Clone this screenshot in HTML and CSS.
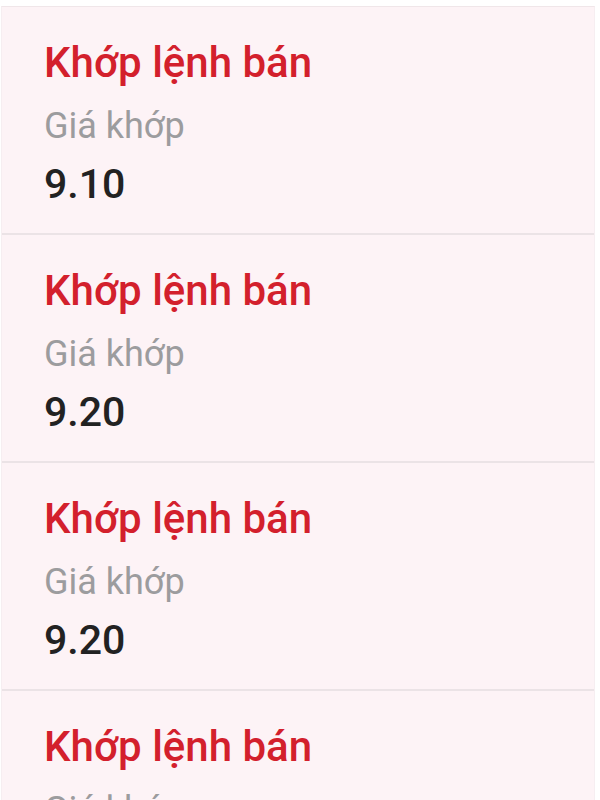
FILE: index.html
```html
<!DOCTYPE html>
<html lang="vi">

<head>
    <meta charset="UTF-8">
    <title>Khớp lệnh</title>
    <link rel="stylesheet" href="styles.css">
</head>

<body>
    <ul class="list">
        <li class="item">
            <div class="title">Khớp lệnh bán</div>
            <div class="label">Giá khớp</div>
            <div class="price">9.10</div>
        </li>
        <li class="item">
            <div class="title">Khớp lệnh bán</div>
            <div class="label">Giá khớp</div>
            <div class="price">9.20</div>
        </li>
        <li class="item">
            <div class="title">Khớp lệnh bán</div>
            <div class="label">Giá khớp</div>
            <div class="price">9.20</div>
        </li>
        <li class="item">
            <div class="title">Khớp lệnh bán</div>
            <div class="label">Giá khớp</div>
            <div class="price">9.30</div>
        </li>
    </ul>
</body>

</html>
```

FILE: styles.css
```css
body {
    margin: 0;
    background: #fff;
    font-family: Roboto, "Noto Sans", sans-serif;
    height: 800px;
    overflow: hidden;
}

.list {
    list-style: none;
    margin: 6px 5px 0 1px;
    padding: 0;
    border-top: 1px solid #f0e6e9;
    border-left: 1px solid #f6eef1;
    border-right: 1px solid #f6eef1;
}

.item {
    display: flex;
    flex-direction: column;
    padding: 31px 42px 25px;
    background: #fdf3f6;
    border-bottom: 2px solid #ebe3e6;
}

.title {
    font-size: 42px;
    line-height: 50px;
    font-weight: 500;
    color: #d3202c;
    margin-bottom: 17px;
}

.label {
    font-size: 36px;
    line-height: 42px;
    color: #9c9c9e;
    margin-bottom: 13px;
}

.price {
    font-size: 41px;
    line-height: 48px;
    font-weight: 500;
    color: #222;
}
```
